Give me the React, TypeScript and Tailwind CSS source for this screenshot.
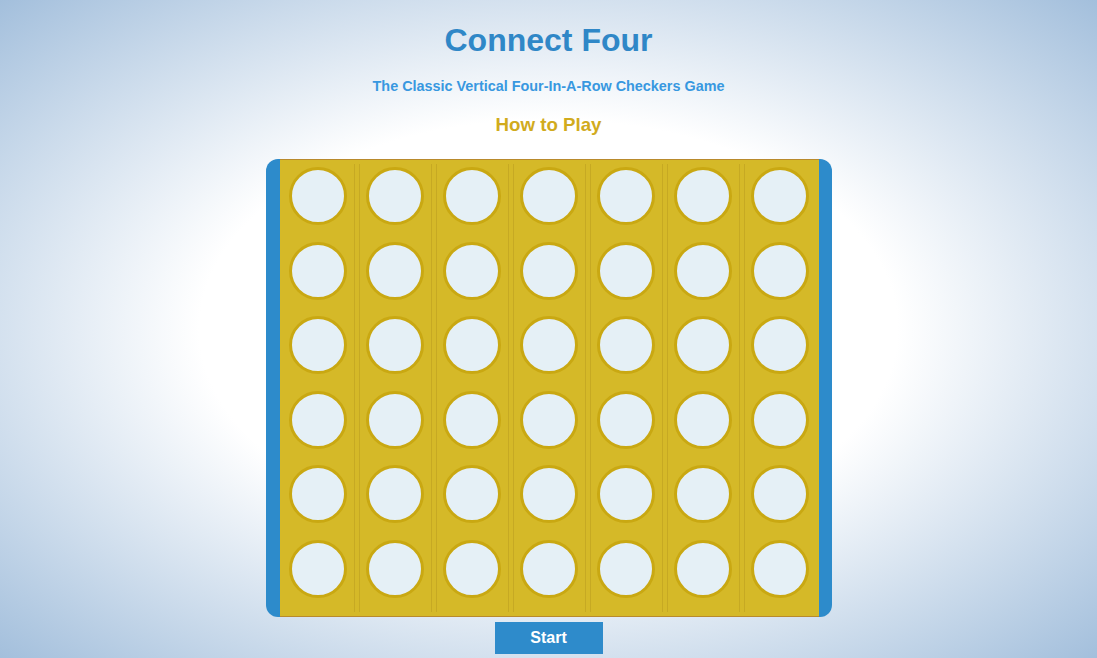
import React from "react";

const COLS = 7;
const ROWS = 6;

function Slot() {
  return (
    <div className="w-[58px] h-[58px] rounded-full border-[3px] border-[#c9a812] bg-[#e5f0f6]" />
  );
}

function Column({ index }: { index: number }) {
  const first = index === 0;
  const last = index === COLS - 1;
  return (
    <div
      className={
        "flex flex-col items-center w-[73px] mx-[2px] pt-[3px] gap-[16.6px] border-x border-[#c6a923] " +
        (first ? "border-l-transparent " : "") +
        (last ? "border-r-transparent" : "")
      }
    >
      {Array.from({ length: ROWS }).map((_, r) => (
        <Slot key={r} />
      ))}
    </div>
  );
}

export default function App() {
  return (
    <div className="min-h-screen w-full flex flex-col items-center bg-[radial-gradient(ellipse_at_center,#ffffff_45%,#a3bfdc_100%)] font-['Liberation_Sans',Arial,sans-serif]">
      <h1 className="mt-[22px] text-[32px] leading-[36px] font-bold text-[#2f87c7]">
        Connect Four
      </h1>
      <h2 className="mt-[20px] text-[14.4px] leading-[16px] font-bold text-[#3898e0]">
        The Classic Vertical Four-In-A-Row Checkers Game
      </h2>
      <h3 className="mt-[20px] text-[18.72px] leading-[22px] font-bold text-[#d1ab1d]">
        How to Play
      </h3>

      {/* Board */}
      <div className="mt-[23px] flex bg-[#2d8bcb] rounded-[12px] pl-[14px] pr-[13px]">
        <div className="flex w-[539px] h-[458px] py-[4px] bg-[#d5b928] border-y border-[#b98a2c]">
          {Array.from({ length: COLS }).map((_, c) => (
            <Column key={c} index={c} />
          ))}
        </div>
      </div>

      <button className="mt-[5px] w-[108px] h-[32px] bg-[#2e8bcb] text-white text-[16px] font-bold">
        Start
      </button>
    </div>
  );
}
